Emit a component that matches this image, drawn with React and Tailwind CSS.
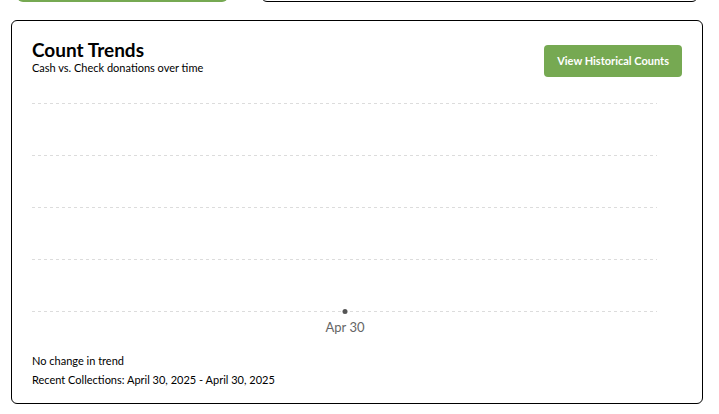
import React from 'react';

const gridLines = [0, 52, 104, 156, 208];

const CountTrends = () => {
  return (
    <div className="ml-[11px] mr-[16px] border border-black rounded-md bg-white px-5 pt-[18px] pb-[14px]">
      {/* Cabecera */}
      <div className="flex items-start justify-between">
        <div>
          <h2 className="text-[19px] leading-[22px] font-bold text-black">Count Trends</h2>
          <p className="text-[11px] leading-[13px] text-black">Cash vs. Check donations over time</p>
        </div>
        <button className="mt-[6px] h-[32px] px-[13px] rounded bg-[#76a952] text-white text-[11px] font-bold">
          View Historical Counts
        </button>
      </div>

      {/* Grafico */}
      <div className="mt-[22px] w-[625px]">
        <svg width="625" height="240" viewBox="0 0 625 240" className="block">
          {gridLines.map((y) => (
            <line
              key={y}
              x1="0"
              x2="625"
              y1={y + 4.5}
              y2={y + 4.5}
              stroke="#dcdcdc"
              strokeWidth="1"
              strokeDasharray="3 3"
            />
          ))}
          <circle cx="313" cy="212.5" r="2.5" fill="#555" />
          <text x="313" y="233" textAnchor="middle" fontSize="13" fill="#666" fontFamily="Lato, sans-serif">
            Apr 30
          </text>
        </svg>
      </div>

      {/* Resumen */}
      <div className="mt-[12px] text-[11px] leading-[19px] text-black">
        <p>No change in trend</p>
        <p>Recent Collections: April 30, 2025 - April 30, 2025</p>
      </div>
    </div>
  );
};

const App = () => {
  return (
    <div className="min-h-screen bg-white font-['Lato',sans-serif] overflow-hidden">
      {/* Restos de la fila superior */}
      <div className="flex gap-[33px] pl-[17px] pr-[21px] -mt-[20px]">
        <div className="w-[211px] h-[22px] rounded-b-md bg-[#76a952]" />
        <div className="flex-1 h-[22px] border border-black rounded-md" />
      </div>
      <div className="h-[18px]" />
      <CountTrends />
    </div>
  );
};

export default App;
